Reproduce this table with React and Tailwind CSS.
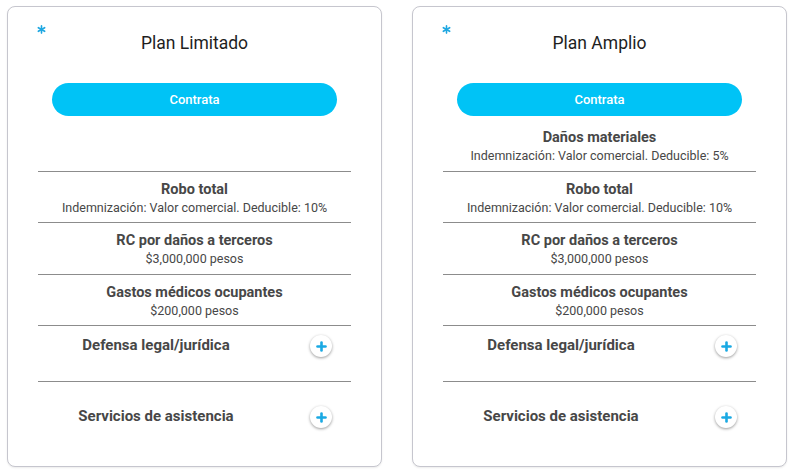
import React from "react";

const plans = [
    { name: "Plan Limitado", extra: null },
    {
        name: "Plan Amplio",
        extra: { title: "Daños materiales", sub: "Indemnización: Valor comercial. Deducible: 5%" },
    },
];

const coverages = [
    { title: "Robo total", sub: "Indemnización: Valor comercial. Deducible: 10%" },
    { title: "RC por daños a terceros", sub: "$3,000,000 pesos" },
    { title: "Gastos médicos ocupantes", sub: "$200,000 pesos" },
];

function Star() {
    return (
        <svg width="9" height="9" viewBox="0 0 10 10" className="absolute left-[29px] top-[18px]">
            <g stroke="#1ea7e1" strokeWidth="1.8" strokeLinecap="round">
                <line x1="5" y1="1" x2="5" y2="9" />
                <line x1="1.5" y1="3" x2="8.5" y2="7" />
                <line x1="1.5" y1="7" x2="8.5" y2="3" />
            </g>
        </svg>
    );
}

function PlusButton() {
    return (
        <div className="mr-[19px] flex h-[22px] w-[22px] items-center justify-center rounded-full bg-white shadow-[0_1px_3px_rgba(0,0,0,0.4)]">
            <svg width="11" height="11" viewBox="0 0 11 11">
                <g stroke="#1aa9e3" strokeWidth="2.6" strokeLinecap="round">
                    <line x1="5.5" y1="1.5" x2="5.5" y2="9.5" />
                    <line x1="1.5" y1="5.5" x2="9.5" y2="5.5" />
                </g>
            </svg>
        </div>
    );
}

function Coverage({ title, sub, className }) {
    return (
        <div className={"border-b border-[#8c8c8c] text-center text-[#474747] " + className}>
            <p className="text-[14.5px] font-bold leading-[18px]">{title}</p>
            <p className="mt-[1px] text-[12.5px] leading-[16px]">{sub}</p>
        </div>
    );
}

function PlanCard({ plan }) {
    return (
        <div className="relative flex h-[461px] w-[375px] flex-col rounded-[8px] border border-[#c6c6ce] bg-white shadow-[0_1px_2px_rgba(0,0,0,0.08)]">
            <Star />
            <h2 className="mt-[25px] text-center text-[17.5px] leading-[22px] text-[#1e1e1e]">{plan.name}</h2>
            <button className="mx-[44px] mt-[29px] h-[33px] rounded-full bg-[#00c3f6] text-[13px] font-medium text-white">
                Contrata
            </button>
            <div className="mx-[30px] mt-[5px] flex flex-1 flex-col">
                {plan.extra ? (
                    <Coverage title={plan.extra.title} sub={plan.extra.sub} className="h-[51px] pt-[8px]" />
                ) : (
                    <div className="h-[51px] border-b border-[#8c8c8c]" />
                )}
                <Coverage {...coverages[0]} className="h-[51px] pt-[9px]" />
                <Coverage {...coverages[1]} className="h-[52px] pt-[9px]" />
                <Coverage {...coverages[2]} className="h-[51px] pt-[9px]" />
                <div className="flex h-[56px] items-start border-b border-[#8c8c8c] pt-[9px]">
                    <p className="w-[236px] text-center text-[15px] font-bold leading-[20px] text-[#474747]">Defensa legal/jurídica</p>
                    <div className="ml-auto"><PlusButton /></div>
                </div>
                <div className="flex items-start pt-[24px]">
                    <p className="w-[236px] text-center text-[15px] font-bold leading-[20px] text-[#474747]">Servicios de asistencia</p>
                    <div className="ml-auto"><PlusButton /></div>
                </div>
            </div>
        </div>
    );
}

export default function App() {
    return (
        <div className="flex h-[475px] w-[800px] gap-[30px] bg-white pl-[7px] pt-[6px]" style={{ fontFamily: "Roboto, 'Liberation Sans', sans-serif" }}>
            {plans.map((p) => (
                <PlanCard key={p.name} plan={p} />
            ))}
        </div>
    );
}
